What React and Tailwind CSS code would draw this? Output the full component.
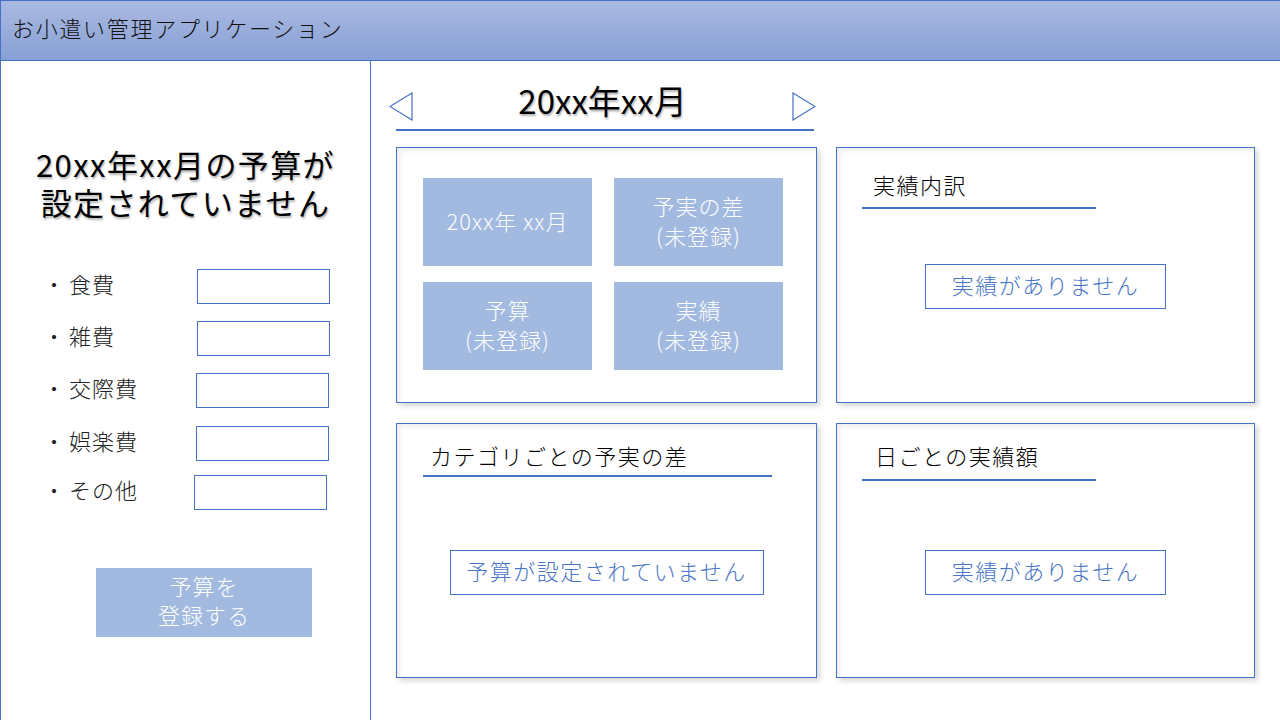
import React from 'react'

const FONT = "font-['Noto_Sans_CJK_JP','Noto_Sans',sans-serif]"

const BUDGET_ROWS = [
  { label: '食費', labelW: 'w-[154px]', mt: 'mt-0' },
  { label: '雑費', labelW: 'w-[154px]', mt: 'mt-[17px]' },
  { label: '交際費', labelW: 'w-[153px]', mt: 'mt-[17px]' },
  { label: '娯楽費', labelW: 'w-[153px]', mt: 'mt-[18px]' },
  { label: 'その他', labelW: 'w-[151px]', mt: 'mt-[14px]' }
]

function Triangle({ dir }) {
  const points = dir === 'left' ? '23,1 1,14.5 23,28' : '1,1 23,14.5 1,28'
  return (
    <svg width="24" height="29" viewBox="0 0 24 29" className="shrink-0">
      <polygon points={points} fill="none" stroke="#4472c4" strokeWidth="1.2" />
    </svg>
  )
}

function Tile({ lines }) {
  return (
    <div className="flex h-[88px] w-[169px] flex-col items-center justify-center bg-[#a2b9e0] pb-[5px] text-[22px] font-light leading-[30px] tracking-[1px] text-white">
      {lines.map((l, i) => (
        <span key={i}>{l}</span>
      ))}
    </div>
  )
}

function Card({ children, className = '' }) {
  return (
    <div
      className={`border border-[#4472c4] bg-white shadow-[inset_3px_3px_4px_rgba(0,0,0,0.07),3px_3px_5px_rgba(0,0,0,0.16)] ${className}`}
    >
      {children}
    </div>
  )
}

function EmptyBox({ text, w, mt }) {
  return (
    <div
      className={`mx-auto flex h-[45px] items-center justify-center border border-[#4472c4] pb-[5px] text-[22px] font-light tracking-[1.5px] text-[#4a76c6] ${w} ${mt}`}
    >
      {text}
    </div>
  )
}

export default function App() {
  return (
    <div className={`flex h-[720px] w-[1280px] flex-col overflow-hidden border-l border-[#4472c4] bg-white ${FONT}`}>
      {/* Header */}
      <header className="flex h-[61px] shrink-0 items-center border-y border-[#4472c4] bg-linear-to-b from-[#abb9e1] to-[#87a0d5] pl-[11px]">
        <h1 className="mb-[7px] text-[22px] font-light tracking-[1.7px] text-[#111]">お小遣い管理アプリケーション</h1>
      </header>

      <div className="flex flex-1">
        {/* Left: budget form */}
        <aside className="flex w-[370px] shrink-0 flex-col border-r border-[#4472c4] pt-[84px]">
          <h2 className="text-center text-[31px] leading-[38px] tracking-[1.4px] text-black [text-shadow:1px_2px_2px_rgba(0,0,0,0.3)]">
            20xx年xx月の予算が
            <br />
            設定されていません
          </h2>

          <div className="mt-[48px] flex flex-col pl-[42px]">
            {BUDGET_ROWS.map((row) => (
              <div key={row.label} className={`flex h-[35px] items-center ${row.mt}`}>
                <div className={`mb-[6px] flex items-center text-[22px] font-light text-[#222] ${row.labelW}`}>
                  <span className="w-[22px] text-center">・</span>
                  <span className="ml-[4px] tracking-[1px]">{row.label}</span>
                </div>
                <input className="h-[35px] w-[133px] border border-[#4472c4] bg-white outline-none" />
              </div>
            ))}
          </div>

          <button className="ml-[95px] mt-[58px] flex h-[69px] w-[216px] flex-col items-center justify-center bg-[#a2b9e0] pb-[6px] text-[22px] font-light leading-[29px] tracking-[1px] text-white">
            <span>予算を</span>
            <span>登録する</span>
          </button>
        </aside>

        {/* Right: month summary */}
        <main className="flex-1 pt-[31px]">
          <div className="ml-[18px] flex h-[29px] w-[427px] items-center justify-between">
            <Triangle dir="left" />
            <span className="mb-[13px] text-[33px] leading-[34px] text-black [text-shadow:1px_2px_2px_rgba(0,0,0,0.3)]">
              20xx年xx月
            </span>
            <Triangle dir="right" />
          </div>
          <div className="ml-[25px] mt-[8px] h-[2px] w-[418px] bg-[#4472c4]" />

          <div className="ml-[25px] mt-[16px] grid w-[860px] grid-cols-[421px_419px] gap-x-[19px] gap-y-[20px]">
            <Card className="h-[256px]">
              <div className="grid grid-cols-[169px_169px] gap-x-[22px] gap-y-[16px] pl-[26px] pt-[30px]">
                <Tile lines={['20xx年 xx月']} />
                <Tile lines={['予実の差', '(未登録)']} />
                <Tile lines={['予算', '(未登録)']} />
                <Tile lines={['実績', '(未登録)']} />
              </div>
            </Card>

            <Card className="h-[256px]">
              <div className="pl-[25px] pt-[21px]">
                <div className="h-[30px] pl-[11px] text-[22px] font-light leading-[30px] tracking-[1.5px] text-black">実績内訳</div>
                <div className="mt-[8px] h-[2px] w-[234px] bg-[#4472c4]" />
              </div>
              <EmptyBox text="実績がありません" w="w-[241px]" mt="mt-[55px]" />
            </Card>

            <Card className="h-[255px]">
              <div className="pl-[26px] pt-[16px]">
                <div className="h-[30px] pl-[7px] text-[22px] font-light leading-[30px] tracking-[1.5px] text-black">カテゴリごとの予実の差</div>
                <div className="mt-[5px] h-[2px] w-[349px] bg-[#4472c4]" />
              </div>
              <EmptyBox text="予算が設定されていません" w="w-[314px]" mt="mt-[73px]" />
            </Card>

            <Card className="h-[255px]">
              <div className="pl-[25px] pt-[16px]">
                <div className="h-[30px] pl-[13px] text-[22px] font-light leading-[30px] tracking-[1.5px] text-black">日ごとの実績額</div>
                <div className="mt-[9px] h-[2px] w-[234px] bg-[#4472c4]" />
              </div>
              <EmptyBox text="実績がありません" w="w-[241px]" mt="mt-[69px]" />
            </Card>
          </div>
        </main>
      </div>
    </div>
  )
}
